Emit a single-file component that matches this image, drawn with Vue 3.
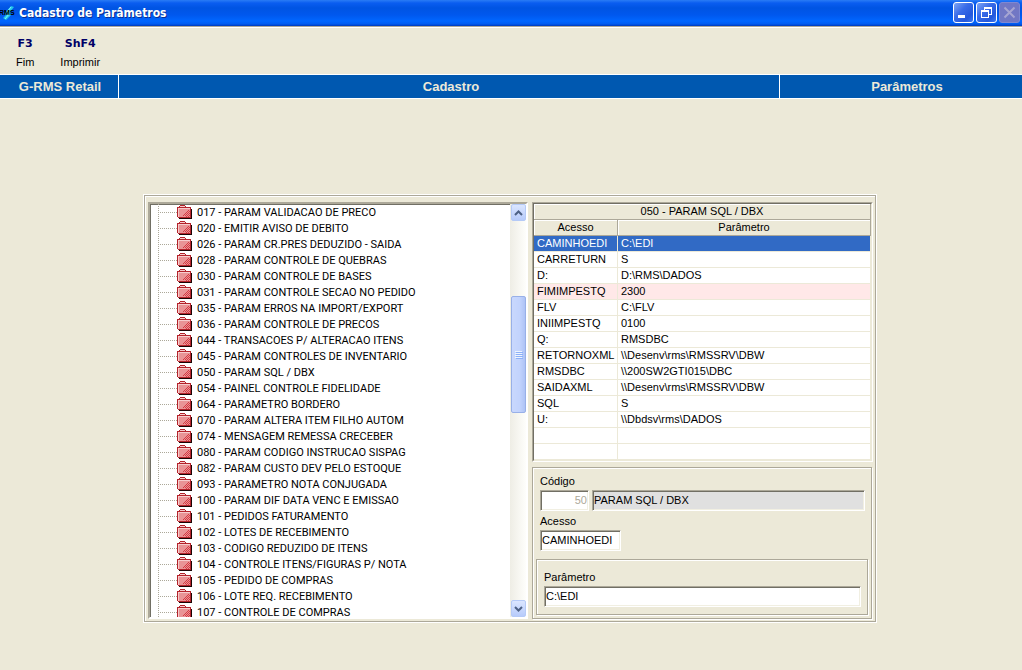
<script setup>
import { ref } from 'vue'

const folders = [
  '017 - PARAM VALIDACAO DE PRECO',
  '020 - EMITIR AVISO DE DEBITO',
  '026 - PARAM CR.PRES DEDUZIDO - SAIDA',
  '028 - PARAM CONTROLE DE QUEBRAS',
  '030 - PARAM CONTROLE DE BASES',
  '031 - PARAM CONTROLE SECAO NO PEDIDO',
  '035 - PARAM ERROS NA IMPORT/EXPORT',
  '036 - PARAM CONTROLE DE PRECOS',
  '044 - TRANSACOES P/ ALTERACAO ITENS',
  '045 - PARAM CONTROLES DE INVENTARIO',
  '050 - PARAM SQL / DBX',
  '054 - PAINEL CONTROLE FIDELIDADE',
  '064 - PARAMETRO BORDERO',
  '070 - PARAM ALTERA ITEM FILHO AUTOM',
  '074 - MENSAGEM REMESSA CRECEBER',
  '080 - PARAM CODIGO INSTRUCAO SISPAG',
  '082 - PARAM CUSTO DEV PELO ESTOQUE',
  '093 - PARAMETRO NOTA CONJUGADA',
  '100 - PARAM DIF DATA VENC E EMISSAO',
  '101 - PEDIDOS FATURAMENTO',
  '102 - LOTES DE RECEBIMENTO',
  '103 - CODIGO REDUZIDO DE ITENS',
  '104 - CONTROLE ITENS/FIGURAS P/ NOTA',
  '105 - PEDIDO DE COMPRAS',
  '106 - LOTE REQ. RECEBIMENTO',
  '107 - CONTROLE DE COMPRAS',
]

const rows = [
  { acesso: 'CAMINHOEDI', valor: 'C:\\EDI', state: 'selected' },
  { acesso: 'CARRETURN', valor: 'S' },
  { acesso: 'D:', valor: 'D:\\RMS\\DADOS' },
  { acesso: 'FIMIMPESTQ', valor: '2300', state: 'marked' },
  { acesso: 'FLV', valor: 'C:\\FLV' },
  { acesso: 'INIIMPESTQ', valor: '0100' },
  { acesso: 'Q:', valor: 'RMSDBC' },
  { acesso: 'RETORNOXML', valor: '\\\\Desenv\\rms\\RMSSRV\\DBW' },
  { acesso: 'RMSDBC', valor: '\\\\200SW2GTI015\\DBC' },
  { acesso: 'SAIDAXML', valor: '\\\\Desenv\\rms\\RMSSRV\\DBW' },
  { acesso: 'SQL', valor: 'S' },
  { acesso: 'U:', valor: '\\\\Dbdsv\\rms\\DADOS' },
  { acesso: '', valor: '' },
  { acesso: '', valor: '' },
]

const codigo = ref('50')
const descricao = ref('PARAM SQL / DBX')
const acesso = ref('CAMINHOEDI')
const parametro = ref('C:\\EDI')
</script>

<template>
  <div class="window">
    <header class="titlebar">
      <svg class="logo" width="16" height="16" viewBox="0 0 16 16" aria-hidden="true">
        <path d="M11 1 L14 2 L10 7 L11 10 L6 15 L3 13 L6 10 L5 8 Z" fill="#22c8e8" />
        <path d="M11 2 L7 7 M9 9 L5 14" stroke="#7df2ff" stroke-width="1" />
        <text x="-1" y="10" class="logo-text">RMS</text>
      </svg>
      <h1>Cadastro de Parâmetros</h1>
      <div class="controls">
        <button type="button" class="ctl" aria-label="Minimizar">
          <svg width="19" height="19" viewBox="0 0 19 19" shape-rendering="crispEdges"><rect x="4" y="12" width="7" height="3" fill="#fff" /></svg>
        </button>
        <button type="button" class="ctl" aria-label="Restaurar">
          <svg width="19" height="19" viewBox="0 0 19 19" shape-rendering="crispEdges">
            <path d="M7 4h8v2h-8zM14 6h1v6h-1zM7 6h1v1h-1zM12 11h2v1h-2z" fill="#fff" />
            <path d="M4 7h8v8h-8zM5 9v5h6v-5z" fill="#fff" fill-rule="evenodd" />
          </svg>
        </button>
        <button type="button" class="ctl off" aria-label="Fechar" disabled>
          <svg width="19" height="19" viewBox="0 0 19 19"><path d="M4.500 4.500L14.500 14.500M14.500 4.500L4.500 14.500" stroke="#a7a5d2" stroke-width="2" /></svg>
        </button>
      </div>
    </header>

    <nav class="toolbar">
      <button type="button" class="tool"><b>F3</b><span>Fim</span></button>
      <button type="button" class="tool"><b>ShF4</b><span>Imprimir</span></button>
    </nav>

    <div class="band">
      <div class="left">G-RMS Retail</div>
      <div class="mid">Cadastro</div>
      <div class="right">Parâmetros</div>
    </div>

    <main class="stage">
      <div class="panel">
        <section class="tree">
          <ul>
            <li v-for="f in folders" :key="f">
              <span class="branch"></span>
              <svg class="folder" width="15" height="14" viewBox="0 0 15 14" shape-rendering="crispEdges" aria-hidden="true">
                <path d="M2 13h13v1h-13zM14 4h1v10h-1z" fill="#1a0404" />
                <path d="M2 1h1v-1h5v1h1v1h5v11h-13v-1h-1v-10h2z" fill="#b4232b" />
                <path d="M3 1h5v1h-5zM1 3h12v9h-12z" fill="#e99496" />
                <path d="M3 1h5v1h-5zM1 3h12v1h-12zM1 4h1v8h-1z" fill="#f7cdcd" />
                <path d="M11 5h1v1h-1zM10 6h1v1h-1zM12 6h1v1h-1zM9 7h1v1h-1zM11 7h1v1h-1zM8 8h1v1h-1zM10 8h1v1h-1zM12 8h1v1h-1zM7 9h1v1h-1zM9 9h1v1h-1zM11 9h1v1h-1zM6 10h1v1h-1zM8 10h1v1h-1zM10 10h1v1h-1zM12 10h1v1h-1zM9 11h1v1h-1zM11 11h1v1h-1z" fill="#d63a42" />
              </svg>
              <span class="name">{{ f }}</span>
            </li>
          </ul>
          <div class="scrollbar">
            <button type="button" class="arrow" aria-label="Rolar para cima">
              <svg width="9" height="6" viewBox="0 0 9 6"><path d="M1 5L4.500 1.500L8 5" /></svg>
            </button>
            <div class="track">
              <div class="above"></div>
              <div class="thumb"><i></i><i></i><i></i><i></i></div>
              <div class="below"></div>
            </div>
            <button type="button" class="arrow" aria-label="Rolar para baixo">
              <svg width="9" height="6" viewBox="0 0 9 6"><path d="M1 1L4.500 4.500L8 1" /></svg>
            </button>
          </div>
        </section>

        <div class="detail">
          <div class="grid">
            <table>
              <colgroup><col class="c1" /><col /></colgroup>
              <thead>
                <tr><th colspan="2">050 - PARAM SQL / DBX</th></tr>
                <tr><th>Acesso</th><th>Parâmetro</th></tr>
              </thead>
              <tbody>
                <tr v-for="(r, i) in rows" :key="i" :class="r.state">
                  <td>{{ r.acesso }}</td>
                  <td>{{ r.valor }}</td>
                </tr>
              </tbody>
            </table>
          </div>

          <form class="etched form" @submit.prevent>
            <label for="codigo">Código</label>
            <div class="pair">
              <input id="codigo" v-model="codigo" class="code" disabled />
              <input v-model="descricao" class="desc" aria-label="Descrição" readonly />
            </div>
            <label for="acesso">Acesso</label>
            <input id="acesso" v-model="acesso" class="access" />
            <div class="etched group">
              <label for="parametro">Parâmetro</label>
              <input id="parametro" v-model="parametro" class="param" />
            </div>
          </form>
        </div>
      </div>
    </main>
  </div>
</template>

<style>
body {
  margin: 0;
  background: #ece9d8;
}
</style>

<style scoped>
* {
  box-sizing: border-box;
}

.window {
  min-height: 100vh;
  background: #ece9d8;
  color: #000;
  font: 11px/16px "Liberation Sans", Arial, sans-serif;
}

button {
  padding: 0;
  border: 0;
  background: none;
  color: inherit;
  font: inherit;
}

.titlebar {
  display: flex;
  align-items: center;
  height: 28px;
  padding: 0 2px 2px 0;
  border-bottom: 1px solid #fff;
  background: linear-gradient(#2a7cf5 0, #0a5df0 3px, #0054e3 8px, #0058ee 15px, #0066ff 21px, #005bf0 24px, #0038b8 26px, #aca899 26px);
}

.logo {
  margin-right: 3px;
}

.logo-text {
  font: bold 7px "Liberation Sans", Arial, sans-serif;
  fill: #000;
}

h1 {
  flex: 1;
  margin: 0;
  color: #fff;
  font: bold 12px/20px "DejaVu Sans Condensed", "DejaVu Sans", sans-serif;
  text-shadow: 1px 1px 0 #0b2f91;
}

.controls {
  display: flex;
  gap: 2px;
}

.ctl {
  width: 21px;
  height: 21px;
  border: 1px solid #fff;
  border-radius: 3px;
  background: linear-gradient(135deg, #7ea5f5 0, #3a6ce8 40%, #2458dc 75%, #3c78f0 100%);
}

.ctl svg {
  display: block;
}

.ctl.off {
  border-color: #7f88d2;
  background: #7177c4;
}

.toolbar {
  display: flex;
  gap: 26px;
  height: 46px;
  padding: 8px 16px 0;
}

.tool {
  display: flex;
  flex-direction: column;
  align-items: center;
  gap: 2px;
}

.tool b {
  color: #000066;
  font: bold 11px/16px "DejaVu Sans", Verdana, sans-serif;
}

.band {
  display: grid;
  grid-template-columns: 118px 1fr 243px;
  border: solid #fff;
  border-width: 1px 0;
  background: #0058b0;
  color: #ece9d8;
  font-size: 13px;
  font-weight: bold;
  line-height: 23px;
  text-align: center;
}

.band div + div {
  border-left: 1px solid #fff;
}

.band .left {
  padding-left: 2px;
}

.band .mid {
  padding-left: 4px;
}

.band .right {
  padding-left: 12px;
}

.stage {
  padding: 96px 146px 48px 144px;
}

.panel {
  display: grid;
  grid-template-columns: 381px 1fr;
  gap: 4px;
  padding: 6px 2px 2px 2px;
  border: 1px solid #aca899;
  outline: 1px solid #fff;
  box-shadow: inset 1px 1px 0 #fff;
}

.tree {
  display: flex;
  margin-left: 1px;
  border: 2px solid;
  border-color: #aca899 #fff #fff #aca899;
  background: #fff;
  box-shadow: inset 1px 1px 0 #716f64;
}

.tree ul {
  flex: 1;
  contain: size;
  margin: 0 0 0 1px;
  padding: 0 0 0 7px;
  overflow: hidden;
  list-style: none;
}

.tree li {
  display: flex;
  align-items: center;
  height: 16px;
  background: repeating-linear-gradient(#aca899 0 1px, transparent 1px 2px) left / 1px 100% no-repeat;
}

.branch {
  width: 19px;
  height: 1px;
  background: repeating-linear-gradient(90deg, #aca899 0 1px, transparent 1px 2px);
}

.folder {
  flex: none;
  margin-right: 5px;
}

.name {
  padding-top: 2px;
  font-family: Roboto, "Liberation Sans", sans-serif;
  line-height: 12px;
  white-space: nowrap;
}

.scrollbar {
  display: flex;
  flex-direction: column;
  width: 16px;
  background: linear-gradient(90deg, #eeede5, #fefefb);
}

.arrow {
  display: grid;
  place-items: center;
  height: 17px;
  margin: 0 0 0 1px;
  border: 1px solid #b5caf7;
  border-radius: 2px;
  background: linear-gradient(#dbe6ff, #b7cbfa);
}

.arrow path {
  fill: none;
  stroke: #4d6185;
  stroke-width: 2;
}

.track {
  display: flex;
  flex: 1;
  flex-direction: column;
}

.above {
  flex: 76;
}

.below {
  flex: 188;
}

.thumb {
  display: flex;
  flex: 116;
  flex-direction: column;
  align-items: center;
  justify-content: center;
  gap: 1px;
  margin: 0 0 0 1px;
  border: 1px solid #98b0e8;
  border-radius: 2px;
  background: linear-gradient(90deg, #c9d8fd, #c2d3fd 60%, #aec3f5);
}

.thumb i {
  width: 7px;
  height: 1px;
  background: #eef4fe;
  box-shadow: 1px 1px 0 #8cb0f8;
}

.detail {
  display: flex;
  flex-direction: column;
  gap: 5px;
}

.grid {
  border: 1px solid;
  border-color: #aca899 #fff #fff #aca899;
  background: #ece9d8;
}

table {
  width: 100%;
  border: 1px solid;
  border-color: #716f64 #ece9d8 #ece9d8 #716f64;
  border-spacing: 0;
  table-layout: fixed;
}

.c1 {
  width: 84px;
}

th,
td {
  height: 16px;
  padding: 0 3px;
  overflow: hidden;
  line-height: 15px;
  white-space: nowrap;
}

th {
  border: solid #aca899;
  border-width: 0 1px 1px 0;
  box-shadow: inset 1px 1px 0 #fff;
  font-weight: normal;
  text-align: center;
}

td {
  border: solid #ece9d8;
  border-width: 0 1px 1px 0;
  background: #fff;
}

.selected td {
  background: #316ac5;
  color: #fff;
}

.marked td {
  background: #ffe8e8;
}

.etched {
  border: 1px solid #aca899;
  box-shadow: inset 1px 1px 0 #fff, 1px 1px 0 #fff;
}

.form {
  display: flex;
  flex-direction: column;
  margin-right: 1px;
  padding: 5px 3px 3px;
}

.form > label,
.pair,
.access {
  margin-left: 4px;
}

label {
  display: block;
  line-height: 16px;
}

.pair {
  display: flex;
  gap: 3px;
  margin-right: 3px;
}

input {
  height: 21px;
  padding: 0 1px 2px;
  border: 1px solid;
  border-color: #aca899 #fff #fff #aca899;
  border-radius: 0;
  outline: 0;
  background: #fff;
  box-shadow: inset 1px 1px 0 #716f64, inset -1px -1px 0 #f1efe2;
  color: #000;
  font: inherit;
}

.pair input {
  margin: 1px 0 2px;
}

.code {
  width: 49px;
  color: #aca899;
  text-align: right;
}

.desc {
  flex: 1;
  min-width: 0;
  background: #e0e0e0;
}

.access {
  width: 81px;
  margin-top: 1px;
}

.group {
  margin-top: 8px;
  padding: 9px 6px 7px 7px;
}

.param {
  width: 100%;
  margin-top: 1px;
}
</style>
